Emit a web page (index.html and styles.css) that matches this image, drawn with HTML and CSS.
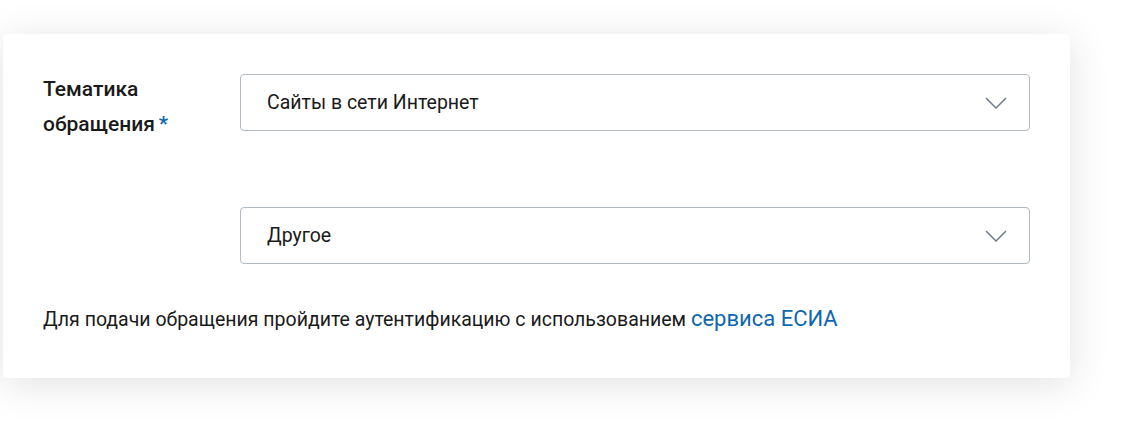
FILE: index.html
```html
<!DOCTYPE html>
<html lang="ru">
<head>
  <meta charset="UTF-8">
  <title>Обращение</title>
  <link rel="stylesheet" href="styles.css">
</head>
<body>
  <div class="card">
    <div class="form-row">
      <div class="field-label">Тематика обращения<span class="req">*</span></div>
      <div class="field-controls">
        <div class="select">
          <span>Сайты в сети Интернет</span>
          <svg class="chevron" width="22" height="12" viewBox="0 0 22 12"><path d="M1 1l10 10L21 1" fill="none" stroke="#6f7c8e" stroke-width="1.5"/></svg>
        </div>
        <div class="select">
          <span>Другое</span>
          <svg class="chevron" width="22" height="12" viewBox="0 0 22 12"><path d="M1 1l10 10L21 1" fill="none" stroke="#6f7c8e" stroke-width="1.5"/></svg>
        </div>
      </div>
    </div>
    <p class="note">Для подачи обращения пройдите аутентификацию с использованием <a href="#">сервиса ЕСИА</a></p>
  </div>
</body>
</html>
```

FILE: styles.css
```css
html, body { min-height: 100%; }
body { margin: 0; padding-bottom: 60px; background: #fff; font-family: Roboto, "Noto Sans", sans-serif; color: #1a1a1a; }
.card { margin: 34px 0 0 3px; width: 1067px; box-sizing: border-box; padding: 40px 40px 46px; background: #fff; border-radius: 4px; box-shadow: 0 6px 40px rgba(0, 0, 0, 0.12); }
.form-row { display: grid; grid-template-columns: 197px 790px; }
.field-label { font-size: 21px; font-weight: 500; line-height: 35px; width: 150px; margin-top: -2px; }
.req { color: #0d67b0; margin-left: 4px; }
.field-controls { display: flex; flex-direction: column; gap: 76px; }
.select { height: 57px; box-sizing: border-box; border: 1px solid #b2bac4; border-radius: 4px; padding: 0 22px 0 26px; display: flex; align-items: center; justify-content: space-between; font-size: 19.5px; }
.note { margin: 43px 0 0; font-size: 19.5px; line-height: 24px; }
.note a { color: #0d67b0; text-decoration: none; font-size: 22px; }
```
